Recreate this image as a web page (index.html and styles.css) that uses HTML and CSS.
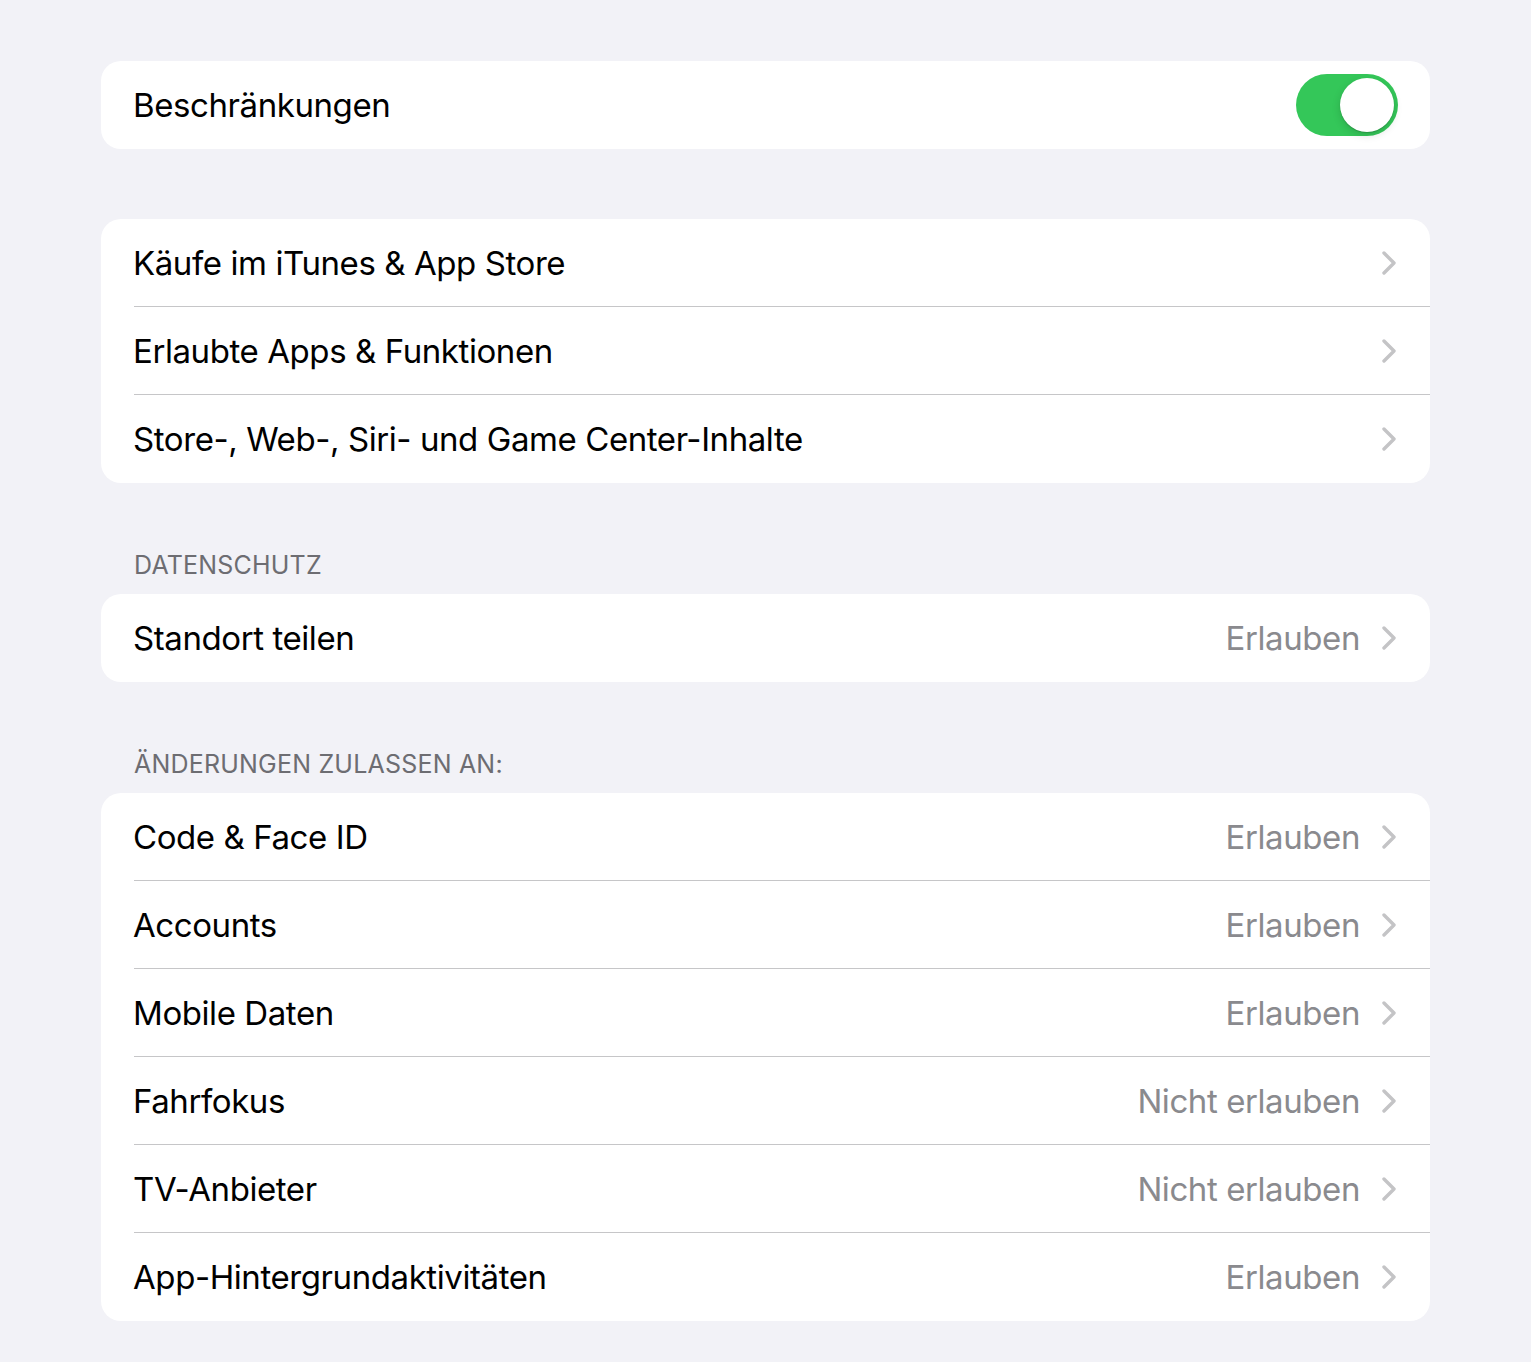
FILE: index.html
```html
<!DOCTYPE html>
<html lang="de">
<head>
    <meta charset="UTF-8">
    <meta name="viewport" content="width=device-width, initial-scale=1.0">
    <title>Bildschirmzeit</title>
    <link rel="stylesheet" href="styles.css">
</head>
<body>
    <div id="settings">
        <div class="group">
            <div class="row">
                <span class="label">Beschränkungen</span>
                <span class="toggle on"><span class="knob"></span></span>
            </div>
        </div>

        <div class="group">
            <div class="row">
                <span class="label">Käufe im iTunes &amp; App Store</span>
                <svg class="chev" viewBox="0 0 14 24"><path d="M2 2 L12 12 L2 22" /></svg>
            </div>
            <div class="row">
                <span class="label">Erlaubte Apps &amp; Funktionen</span>
                <svg class="chev" viewBox="0 0 14 24"><path d="M2 2 L12 12 L2 22" /></svg>
            </div>
            <div class="row">
                <span class="label">Store-, Web-, Siri- und Game Center-Inhalte</span>
                <svg class="chev" viewBox="0 0 14 24"><path d="M2 2 L12 12 L2 22" /></svg>
            </div>
        </div>

        <div class="header">DATENSCHUTZ</div>
        <div class="group tight">
            <div class="row">
                <span class="label">Standort teilen</span>
                <span class="value">Erlauben</span>
                <svg class="chev" viewBox="0 0 14 24"><path d="M2 2 L12 12 L2 22" /></svg>
            </div>
        </div>

        <div class="header">ÄNDERUNGEN ZULASSEN AN:</div>
        <div class="group tight">
            <div class="row">
                <span class="label">Code &amp; Face ID</span>
                <span class="value">Erlauben</span>
                <svg class="chev" viewBox="0 0 14 24"><path d="M2 2 L12 12 L2 22" /></svg>
            </div>
            <div class="row">
                <span class="label">Accounts</span>
                <span class="value">Erlauben</span>
                <svg class="chev" viewBox="0 0 14 24"><path d="M2 2 L12 12 L2 22" /></svg>
            </div>
            <div class="row">
                <span class="label">Mobile Daten</span>
                <span class="value">Erlauben</span>
                <svg class="chev" viewBox="0 0 14 24"><path d="M2 2 L12 12 L2 22" /></svg>
            </div>
            <div class="row">
                <span class="label">Fahrfokus</span>
                <span class="value">Nicht erlauben</span>
                <svg class="chev" viewBox="0 0 14 24"><path d="M2 2 L12 12 L2 22" /></svg>
            </div>
            <div class="row">
                <span class="label">TV-Anbieter</span>
                <span class="value">Nicht erlauben</span>
                <svg class="chev" viewBox="0 0 14 24"><path d="M2 2 L12 12 L2 22" /></svg>
            </div>
            <div class="row">
                <span class="label">App-Hintergrundaktivitäten</span>
                <span class="value">Erlauben</span>
                <svg class="chev" viewBox="0 0 14 24"><path d="M2 2 L12 12 L2 22" /></svg>
            </div>
        </div>
    </div>
</body>
</html>
```

FILE: styles.css
```css
html, body {
    margin: 0;
    background: #f2f2f7;
}
body {
    font-family: Inter, "Noto Sans", sans-serif;
    color: #000;
}
#settings {
    padding: 61px 101px 41px;
}

.group {
    background: #fff;
    border-radius: 20px;
    overflow: hidden;
    margin-bottom: 70px;
}
.group.tight {
    margin-bottom: 0;
}

.row {
    display: flex;
    align-items: center;
    height: 88px;
    margin-left: 33px;
    padding-right: 34px;
    border-bottom: 1px solid #c6c6c8;
    box-sizing: border-box;
}
.row:last-child {
    border-bottom: none;
}

.label {
    flex: 1;
    font-size: 33px;
    letter-spacing: -0.42px;
    margin-left: -1px;
}
.value {
    font-size: 33px;
    letter-spacing: -0.42px;
    color: #8a8a8e;
    margin-right: 22px;
}

.chev {
    width: 14px;
    height: 24px;
    flex: none;
}
.chev path {
    fill: none;
    stroke: #c4c4c6;
    stroke-width: 3.4;
    stroke-linecap: round;
    stroke-linejoin: round;
}

.header {
    padding: 2px 0 13px 33px;
    line-height: 32px;
    font-size: 25px;
    color: #6d6d72;
    letter-spacing: 0.2px;
}
.group:not(.tight) + .header {
    margin-top: -6px;
}
.group.tight + .header {
    margin-top: 64px;
}

.toggle {
    position: relative;
    width: 102px;
    height: 62px;
    border-radius: 31px;
    background: #34c759;
    margin-right: -2px;
}
.toggle .knob {
    position: absolute;
    top: 4px;
    right: 4px;
    width: 54px;
    height: 54px;
    border-radius: 50%;
    background: #fff;
    box-shadow: 0 3px 8px rgba(0,0,0,0.15), 0 1px 1px rgba(0,0,0,0.16);
}
```
